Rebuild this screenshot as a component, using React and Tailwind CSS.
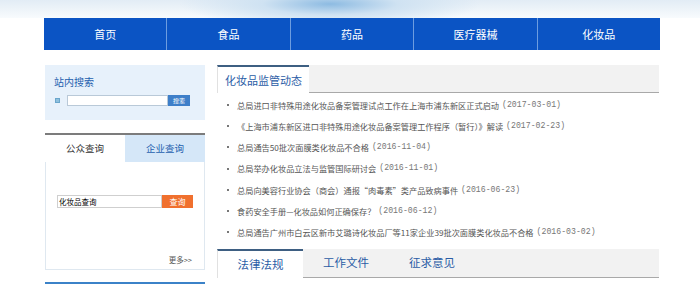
const navItems = ['首页', '食品', '药品', '医疗器械', '化妆品']

const news = [
  { title: '总局进口非特殊用途化妆品备案管理试点工作在上海市浦东新区正式启动', date: '2017-03-01' },
  { title: '《上海市浦东新区进口非特殊用途化妆品备案管理工作程序（暂行）》解读', date: '2017-02-23' },
  { title: '总局通告50批次面膜类化妆品不合格', date: '2016-11-04' },
  { title: '总局举办化妆品立法与监管国际研讨会', date: '2016-11-01' },
  { title: '总局向美容行业协会（商会）通报“肉毒素”类产品致病事件', date: '2016-06-23' },
  { title: '食药安全手册—化妆品如何正确保存？', date: '2016-06-12' },
  { title: '总局通告广州市白云区新市艾璐诗化妆品厂等11家企业39批次面膜类化妆品不合格', date: '2016-03-02' },
]

export default function App() {
  return (
    <div className="w-[700px] h-[284px] overflow-hidden bg-white font-['Noto_Sans_CJK_SC','Noto_Sans',sans-serif] text-[#333]">
      <div className="h-[18px] bg-[radial-gradient(ellipse_150px_24px_at_330px_4px,#8dbbe2_0%,#cfe2f2_45%,transparent_100%),linear-gradient(to_bottom,#e2ecf5,#f8fbfd)]" />

      <div className="ml-[44px] w-[616px] h-[32px] bg-[#0b54c4] flex">
        {navItems.map((n, i) => (
          <div
            key={n}
            className={`flex-1 flex items-center justify-center text-white text-[11px] ${i > 0 ? 'border-l border-[#6d9de0]' : ''}`}
          >
            {n}
          </div>
        ))}
      </div>

      <div className="ml-[45px] mt-[15px] flex gap-[12px]">
        {/* sidebar */}
        <div className="w-[160px] shrink-0">
          <div className="h-[55px] bg-[#e7f1fb] px-[9px] pt-[10px]">
            <div className="text-[10px] leading-[14px] text-[#1f5fae]">站内搜索</div>
            <div className="mt-[6px] flex items-center h-[11px]">
              <div className="w-[5px] h-[5px] bg-[#8fc0dd] border border-[#6aa6cc] mr-[7px] ml-[1px]" />
              <div className="w-[101px] h-[11px] bg-white border border-[#b9c9d8]" />
              <div className="w-[22px] h-[11px] bg-[#3e7fc9] text-white text-[6px] leading-[11px] text-center">搜索</div>
            </div>
          </div>

          <div className="mt-[13px] border-t-2 border-[#7c7c7c]">
            <div className="flex h-[27px] text-[9.5px]">
              <div className="w-[80px] bg-white flex items-center justify-center text-[#333]">公众查询</div>
              <div className="w-[80px] bg-[#d5e7f8] flex items-center justify-center text-[#1f5fae]">企业查询</div>
            </div>
            <div className="h-[108px] border border-t-0 border-[#dfe8f0] px-[11px] pt-[33px]">
              <div className="flex h-[13px]">
                <div className="w-[109px] h-[13px] border border-[#cfcfcf] text-[7.5px] leading-[11px] text-black pl-[1px]">化妆品查询</div>
                <div className="w-[32px] h-[13px] bg-[#f0702e] text-white text-[8px] leading-[13px] text-center">查询</div>
              </div>
              <div className="mt-[46px] text-right text-[7.5px] text-[#555] pr-[1px]">更多&gt;&gt;</div>
            </div>
          </div>

          <div className="mt-[12px] h-[10px] border-t-2 border-[#3b82c8] bg-[#f4f8fc]" />
        </div>

        {/* main */}
        <div className="w-[442px]">
          <div className="h-[28px] bg-[#f2f2f2] border-b border-[#a9a9a9] flex">
            <div className="w-[92px] h-[28px] bg-white border-t-2 border-l border-[#e1e1e1] border-t-[#3e5f82] flex items-center justify-center text-[11px] text-[#2b5da6]">
              化妆品监管动态
            </div>
          </div>

          <ul className="pt-[1px]">
            {news.map(n => (
              <li key={n.date} className="h-[21.3px] flex items-center">
                <span className="w-[2px] h-[2px] bg-[#777] ml-[10px] mr-[8px]" />
                <span className="text-[8.2px] text-[#555] whitespace-nowrap">{n.title}</span>
                <span className="ml-[3px] text-[8.2px] text-[#777] font-['Liberation_Mono',monospace] whitespace-nowrap">({n.date})</span>
              </li>
            ))}
          </ul>

          <div className="mt-[6px] h-[29px] bg-[#f2f2f2] border-b border-[#a9a9a9] flex text-[11.5px] text-[#2b5da6]">
            <div className="w-[86px] h-[29px] bg-white border-t-2 border-l border-[#e1e1e1] border-t-[#3e5f82] flex items-center justify-center">
              法律法规
            </div>
            <div className="w-[86px] flex items-center justify-center">工作文件</div>
            <div className="w-[86px] flex items-center justify-center">征求意见</div>
          </div>
        </div>
      </div>
    </div>
  )
}
